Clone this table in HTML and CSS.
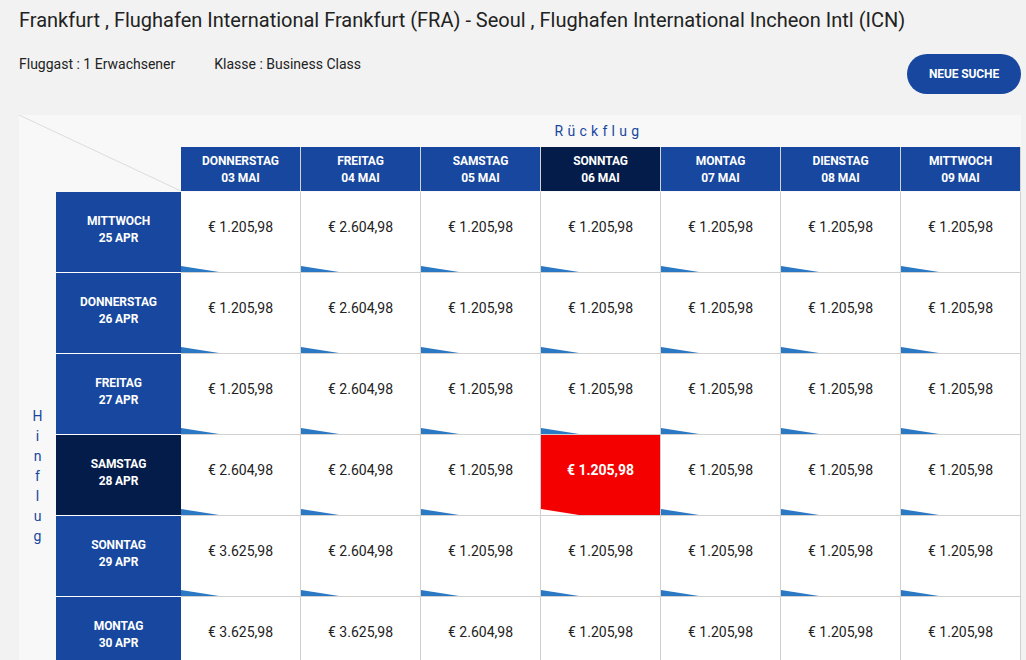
FILE: index.html
```html
<!DOCTYPE html>
<html lang="de">
<head>
<meta charset="utf-8">
<title>Flugpreise</title>
<link rel="stylesheet" href="styles.css">
</head>
<body>
<div class="page">
  <h1 class="title">Frankfurt , Flughafen International Frankfurt (FRA) - Seoul , Flughafen International Incheon Intl (ICN)</h1>
  <div class="bar">
    <div class="info">
      <span class="info-item">Fluggast : 1 Erwachsener</span>
      <span class="info-item">Klasse : Business Class</span>
    </div>
    <button class="btn">NEUE SUCHE</button>
  </div>

  <div class="matrix">
    <div class="corner">
      <svg width="162" height="77" viewBox="0 0 162 77"><line x1="0" y1="0" x2="162" y2="76" stroke="#dcdcdc" stroke-width="1"/></svg>
    </div>
    <div class="ret-label">Rückflug</div>

    <div class="col-head"><span>DONNERSTAG</span><span>03 MAI</span></div>
    <div class="col-head"><span>FREITAG</span><span>04 MAI</span></div>
    <div class="col-head"><span>SAMSTAG</span><span>05 MAI</span></div>
    <div class="col-head dark"><span>SONNTAG</span><span>06 MAI</span></div>
    <div class="col-head"><span>MONTAG</span><span>07 MAI</span></div>
    <div class="col-head"><span>DIENSTAG</span><span>08 MAI</span></div>
    <div class="col-head"><span>MITTWOCH</span><span>09 MAI</span></div>

    <div class="out-label">Hinflug</div>

    <div class="row-head"><span>MITTWOCH</span><span>25 APR</span></div>
    <div class="cell">€ 1.205,98</div>
    <div class="cell">€ 2.604,98</div>
    <div class="cell">€ 1.205,98</div>
    <div class="cell">€ 1.205,98</div>
    <div class="cell">€ 1.205,98</div>
    <div class="cell">€ 1.205,98</div>
    <div class="cell">€ 1.205,98</div>

    <div class="row-head"><span>DONNERSTAG</span><span>26 APR</span></div>
    <div class="cell">€ 1.205,98</div>
    <div class="cell">€ 2.604,98</div>
    <div class="cell">€ 1.205,98</div>
    <div class="cell">€ 1.205,98</div>
    <div class="cell">€ 1.205,98</div>
    <div class="cell">€ 1.205,98</div>
    <div class="cell">€ 1.205,98</div>

    <div class="row-head"><span>FREITAG</span><span>27 APR</span></div>
    <div class="cell">€ 1.205,98</div>
    <div class="cell">€ 2.604,98</div>
    <div class="cell">€ 1.205,98</div>
    <div class="cell">€ 1.205,98</div>
    <div class="cell">€ 1.205,98</div>
    <div class="cell">€ 1.205,98</div>
    <div class="cell">€ 1.205,98</div>

    <div class="row-head dark"><span>SAMSTAG</span><span>28 APR</span></div>
    <div class="cell">€ 2.604,98</div>
    <div class="cell">€ 2.604,98</div>
    <div class="cell">€ 1.205,98</div>
    <div class="cell selected">€ 1.205,98</div>
    <div class="cell">€ 1.205,98</div>
    <div class="cell">€ 1.205,98</div>
    <div class="cell">€ 1.205,98</div>

    <div class="row-head"><span>SONNTAG</span><span>29 APR</span></div>
    <div class="cell">€ 3.625,98</div>
    <div class="cell">€ 2.604,98</div>
    <div class="cell">€ 1.205,98</div>
    <div class="cell">€ 1.205,98</div>
    <div class="cell">€ 1.205,98</div>
    <div class="cell">€ 1.205,98</div>
    <div class="cell">€ 1.205,98</div>

    <div class="row-head"><span>MONTAG</span><span>30 APR</span></div>
    <div class="cell">€ 3.625,98</div>
    <div class="cell">€ 3.625,98</div>
    <div class="cell">€ 2.604,98</div>
    <div class="cell">€ 1.205,98</div>
    <div class="cell">€ 1.205,98</div>
    <div class="cell">€ 1.205,98</div>
    <div class="cell">€ 1.205,98</div>

    <div class="row-head"><span>DIENSTAG</span><span>01 MAI</span></div>
    <div class="cell">€ 3.625,98</div>
    <div class="cell">€ 3.625,98</div>
    <div class="cell">€ 2.604,98</div>
    <div class="cell">€ 1.205,98</div>
    <div class="cell">€ 1.205,98</div>
    <div class="cell">€ 1.205,98</div>
    <div class="cell">€ 1.205,98</div>
  </div>
</div>
</body>
</html>
```
FILE: styles.css
```css
* { box-sizing: border-box; }

html { overflow: hidden; }

body {
  margin: 0;
  background: #f2f2f2;
  font-family: Roboto, "Liberation Sans", sans-serif;
  color: #222;
}

.page {
  padding: 8px 5px 0 19px;
}

.title {
  margin: 0;
  font-size: 20px;
  line-height: 24px;
  font-weight: 400;
  color: #222;
}

.bar {
  display: flex;
  justify-content: space-between;
  align-items: flex-start;
  margin-top: 22px;
}

.info {
  display: flex;
  gap: 39px;
  font-size: 14px;
  line-height: 20px;
}

.btn {
  width: 114px;
  height: 40px;
  border: none;
  border-radius: 20px;
  background: #17479e;
  color: #fff;
  font-family: Roboto, "Liberation Sans", sans-serif;
  font-weight: 700;
  font-size: 12px;
  letter-spacing: -0.1px;
  padding: 0;
}

.matrix {
  margin-top: 21px;
  width: 1002px;
  background: #f8f8f8;
  display: grid;
  grid-template-columns: 37px 125px repeat(7, 120px);
  grid-template-rows: 32px 45px repeat(7, 81px);
}

.corner {
  grid-column: 1 / 3;
  grid-row: 1 / 3;
}
.corner svg { display: block; }

.ret-label {
  grid-column: 3 / 10;
  grid-row: 1;
  display: flex;
  align-items: center;
  justify-content: center;
  padding-right: 4px;
  font-size: 14px;
  letter-spacing: 4.3px;
  color: #17479e;
}

.out-label {
  grid-column: 1;
  grid-row: 3 / 10;
  display: flex;
  align-items: center;
  justify-content: center;
  padding-top: 4px;
  writing-mode: vertical-lr;
  text-orientation: upright;
  font-size: 14px;
  letter-spacing: 4px;
  color: #17479e;
}

.col-head,
.row-head {
  display: flex;
  flex-direction: column;
  align-items: center;
  justify-content: center;
  background: #17479e;
  color: #fff;
  font-weight: 700;
  font-size: 12px;
  line-height: 17px;
  letter-spacing: -0.1px;
}

.col-head {
  border-right: 1px solid #d4d4d4;
  border-bottom: 1px solid #f8f8f8;
  padding-top: 2px;
}

.row-head {
  border-bottom: 1px solid #fff;
  padding-bottom: 4px;
}

.col-head.dark,
.row-head.dark {
  background: #041c4a;
}

.cell {
  position: relative;
  background: #fff;
  border-right: 1px solid #d0d0d0;
  border-bottom: 1px solid #d0d0d0;
  font-size: 14px;
  line-height: 20px;
  text-align: center;
  padding-top: 25px;
  color: #222;
}

.cell::after {
  content: "";
  position: absolute;
  left: 0;
  bottom: 0;
  width: 38px;
  height: 6px;
  background: #2b78c4;
  clip-path: polygon(0 0, 100% 100%, 0 100%);
}

.cell.selected {
  background: #f50000;
  color: #fff;
  font-weight: 700;
}

.cell.selected::after {
  background: #fff;
}
```
